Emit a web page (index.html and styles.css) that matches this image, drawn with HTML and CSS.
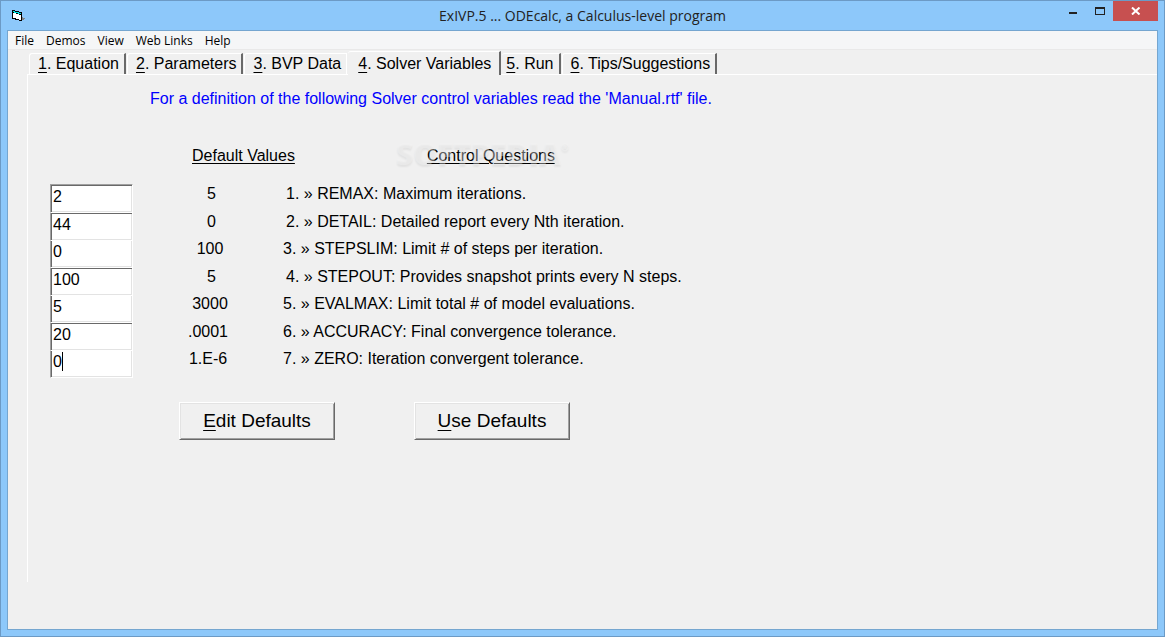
FILE: index.html
```html
<!DOCTYPE html>
<html lang="en">
<head>
    <meta charset="UTF-8">
    <meta name="viewport" content="width=device-width, initial-scale=1.0">
    <title>ExIVP.5 ... ODEcalc, a Calculus-level program</title>
    <link rel="stylesheet" href="styles.css">
</head>
<body>
    <div class="window">
        <header class="titlebar">
            <svg class="app-icon" width="16" height="16" viewBox="0 0 16 16" shape-rendering="crispEdges">
                <path d="M2 1h3v1h4v1h3v9H9v-1H5v-1H2z" fill="#000"/>
                <path d="M3 4h3v1h3v1h2v5H9v-1H6V9H3z" fill="#fff"/>
                <path d="M3 2h2v1h4v1h2v1H8V4H4V3H3z" fill="#00e5e5"/>
                <path d="M12 8h1v1h2v1h-1v1h-2z" fill="#808080"/>
            </svg>
            <h1>ExIVP.5 ... ODEcalc, a Calculus-level program</h1>
            <div class="window-buttons">
                <button class="win-btn" aria-label="Minimize">
                    <svg width="12" height="12" viewBox="0 0 12 12"><path d="M2 7h8v2H2z" fill="#222"/></svg>
                </button>
                <button class="win-btn" aria-label="Maximize">
                    <svg width="12" height="12" viewBox="0 0 12 12"><path d="M1 2h10v8H1zM2 4v5h8V4z" fill="#222" fill-rule="evenodd"/></svg>
                </button>
                <button class="win-btn close" aria-label="Close">
                    <svg width="10" height="8" viewBox="0 0 10 8"><path d="M1 0.500L8.500 7.500M8.500 0.500L1 7.500" stroke="#fff" stroke-width="2"/></svg>
                </button>
            </div>
        </header>

        <main class="client">
            <nav class="menubar">
                <button>File</button>
                <button>Demos</button>
                <button>View</button>
                <button>Web Links</button>
                <button>Help</button>
            </nav>

            <div class="tabs" role="tablist">
                <button class="tab" role="tab"><u>1</u>. Equation</button>
                <button class="tab" role="tab"><u>2</u>. Parameters</button>
                <button class="tab before-active" role="tab"><u>3</u>. BVP Data</button>
                <button class="tab active" role="tab" aria-selected="true"><u>4</u>. Solver Variables</button>
                <button class="tab after-active" role="tab"><u>5</u>. Run</button>
                <button class="tab" role="tab"><u>6</u>. Tips/Suggestions</button>
            </div>

            <section class="pane">
                <p class="hint">For a definition of the following Solver control variables read the 'Manual.rtf' file.</p>

                <div class="headings">
                    <h2>Default Values</h2>
                    <h2>Control Questions</h2>
                    <div class="watermark">SOFTPEDIA<sup>®</sup></div>
                </div>

                <table class="variables">
                    <tr class="short">
                        <td><input type="text" id="remax" value="2"></td>
                        <td class="default">5</td>
                        <td><label for="remax">1. » REMAX: Maximum iterations.</label></td>
                    </tr>
                    <tr class="short">
                        <td><input type="text" id="detail" value="44"></td>
                        <td class="default">0</td>
                        <td><label for="detail">2. » DETAIL: Detailed report every Nth iteration.</label></td>
                    </tr>
                    <tr>
                        <td><input type="text" id="stepslim" value="0"></td>
                        <td class="default">100</td>
                        <td><label for="stepslim">3. » STEPSLIM: Limit # of steps per iteration.</label></td>
                    </tr>
                    <tr class="short">
                        <td><input type="text" id="stepout" value="100"></td>
                        <td class="default">5</td>
                        <td><label for="stepout">4. » STEPOUT: Provides snapshot prints every N steps.</label></td>
                    </tr>
                    <tr>
                        <td><input type="text" id="evalmax" value="5"></td>
                        <td class="default">3000</td>
                        <td><label for="evalmax">5. » EVALMAX: Limit total # of model evaluations.</label></td>
                    </tr>
                    <tr class="long">
                        <td><input type="text" id="accuracy" value="20"></td>
                        <td class="default">.0001</td>
                        <td><label for="accuracy">6. » ACCURACY: Final convergence tolerance.</label></td>
                    </tr>
                    <tr class="long">
                        <td class="focused"><input type="text" id="zero" value="0"></td>
                        <td class="default">1.E-6</td>
                        <td><label for="zero">7. » ZERO: Iteration convergent tolerance.</label></td>
                    </tr>
                </table>

                <div class="actions">
                    <button><u>E</u>dit Defaults</button>
                    <button><u>U</u>se Defaults</button>
                </div>
            </section>
        </main>
    </div>
</body>
</html>
```

FILE: styles.css
```css
* {
    box-sizing: border-box;
}

body {
    margin: 0;
    font-family: "Liberation Sans", Arial, sans-serif;
    font-size: 16px;
    color: #000;
}

button {
    font: inherit;
    color: inherit;
    border: none;
    background: none;
    padding: 0;
    white-space: nowrap;
}

u {
    text-underline-offset: 3px;
    text-decoration-thickness: 1px;
}

.window {
    display: flex;
    flex-direction: column;
    min-height: 100vh;
    padding: 0 6px 6px;
    background: #8dc8fa;
    border: 1px solid #6c9ac5;
}

/* Title bar */
.titlebar {
    display: grid;
    grid-template-columns: 1fr auto 1fr;
    height: 29px;
}

.app-icon {
    margin: 8px 0 0 3px;
}

.titlebar h1 {
    margin: 0;
    font-family: "Open Sans", sans-serif;
    font-size: 14px;
    font-weight: normal;
    line-height: 29px;
    color: #222;
}

.window-buttons {
    display: flex;
    justify-content: flex-end;
    align-items: flex-start;
}

.win-btn {
    display: flex;
    align-items: center;
    justify-content: center;
    width: 27px;
    height: 20px;
}

.win-btn.close {
    width: 45px;
    background: #c75050;
}

/* Client area */
.client {
    flex: 1;
    padding-bottom: 47px;
    display: flex;
    flex-direction: column;
    background: #f0f0f0;
    border: 1px solid #75a6d0;
}

.menubar {
    display: flex;
    gap: 12px;
    height: 19px;
    padding-left: 7px;
    background: #f5f6f7;
    border-bottom: 1px solid #e9e9e9;
    font-family: "Open Sans", sans-serif;
    font-size: 12px;
    line-height: 20px;
}

/* Tabs */
.tabs {
    display: flex;
    align-items: flex-end;
    gap: 1px;
    height: 24px;
    padding-left: 21px;
}

.tab {
    height: 21px;
    padding: 0 5px 0 8px;
    line-height: 20px;
    border-top: 1px solid #fff;
    border-left: 1px solid #fff;
    border-right: 2px solid #696969;
    border-top-left-radius: 3px;
}

.tab.before-active {
    border-right: 1px solid #fff;
}

.tab.active {
    height: 24px;
    margin-bottom: -1px;
    padding: 0 8px 0 10px;
    line-height: 22px;
    background: #f0f0f0;
    border-left: none;
    position: relative;
}

.tab.after-active {
    padding-left: 4px;
    border-left: none;
}

.pane {
    flex: 1;
    margin-left: 19px;
    border-top: 1px solid #fff;
    border-left: 1px solid #fff;
}

.hint {
    margin: 15px 0 0 122px;
    line-height: 18px;
    color: #0000ff;
}

/* Solver variables */
.headings {
    display: flex;
    gap: 132px;
    width: max-content;
    margin: 39px 0 0 164px;
    position: relative;
}

.headings h2 {
    margin: 0;
    font-size: 16px;
    font-weight: normal;
    line-height: 18px;
    text-decoration: underline;
    text-decoration-thickness: 1px;
    text-underline-offset: 2px;
}

.watermark {
    position: absolute;
    left: 204px;
    top: -9px;
    font-family: "Open Sans", sans-serif;
    font-size: 30px;
    font-weight: 800;
    line-height: 32px;
    color: rgba(245, 245, 245, 0.4);
    text-shadow: 0 2px 2px rgba(0, 0, 0, 0.06);
    white-space: nowrap;
    pointer-events: none;
}

.watermark sup {
    font-size: 10px;
    line-height: 10px;
    vertical-align: 14px;
}

.variables {
    margin: 19px 0 0 22px;
    border-collapse: separate;
    border-spacing: 0;
}

.variables td {
    height: 27px;
    padding: 0;
    vertical-align: top;
    line-height: 16px;
    white-space: nowrap;
}

/* The boxes overlap slightly, so the top edge differs from row to row */
.variables tr:nth-child(even) td {
    height: 28px;
    padding-top: 1px;
}

.variables tr:first-child td {
    height: 29px;
    padding-top: 2px;
}

.variables input {
    display: block;
    width: 83px;
    height: 27px;
    padding: 0 0 4px 2px;
    font: inherit;
    line-height: 21px;
    color: inherit;
    background: #fff;
    border: 0 solid #fff;
    border-width: 0 1px 1px;
    border-left-color: #a0a0a0;
    border-radius: 0;
    outline: none;
    box-shadow: inset 1px 0 #696969, inset -1px -1px #e3e3e3;
}

.variables tr:nth-child(even) input {
    height: 28px;
    margin-top: -1px;
    padding-top: 1px;
    box-shadow: inset 1px 1px #696969, inset -1px -1px #e3e3e3;
}

.variables tr:first-child input {
    height: 29px;
    margin-top: -2px;
    padding-top: 1px;
    border-top: 1px solid #a0a0a0;
    box-shadow: inset 1px 1px #696969, inset -1px -1px #e3e3e3;
}

.variables .default {
    width: 150px;
    padding-left: 4px;
    text-align: center;
}

.variables .short .default {
    padding-left: 7px;
}

.variables .short label {
    padding-left: 3px;
}

.variables .long .default {
    padding-left: 0;
}

/* Text cursor in the active box */
.focused {
    position: relative;
}

.focused::after {
    content: "";
    position: absolute;
    left: 12px;
    top: 1px;
    width: 1px;
    height: 19px;
    background: #000;
}

.actions {
    display: flex;
    gap: 79px;
    margin: 24px 0 0 151px;
}

.actions button {
    width: 156px;
    height: 38px;
    font-size: 19px;
    border: 1px solid #fff;
    border-right-color: #696969;
    border-bottom-color: #696969;
    box-shadow: inset 1px 1px #e3e3e3, inset -1px -1px #a0a0a0;
}
```
